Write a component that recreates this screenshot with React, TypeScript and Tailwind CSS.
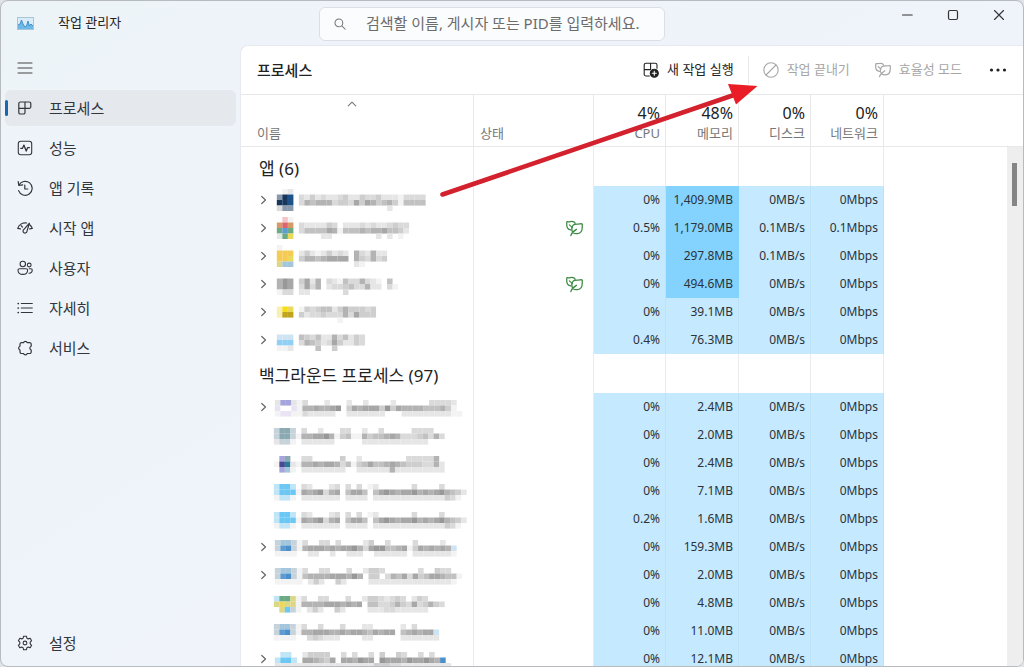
import React from "react";

type IconProps = { children: React.ReactNode; className?: string };

function Icon({ children, className = "size-4" }: IconProps) {
  return (
    <svg
      viewBox="0 0 16 16"
      className={"shrink-0 " + className}
      fill="none"
      stroke="currentColor"
      strokeWidth="1.1"
      strokeLinecap="round"
      strokeLinejoin="round"
      aria-hidden="true"
    >
      {children}
    </svg>
  );
}

const ProcessesIcon = () => (
  <Icon>
    <path
      d="M8 2H3.400A1.600 1.600 0 0 0 1.800 3.600v8.800A1.600 1.600 0 0 0 3.400 14h3A1.600 1.600 0 0 0 8 12.400zM1.800 8.400h10.400A1.600 1.600 0 0 0 13.800 6.800V3.600A1.600 1.600 0 0 0 12.200 2H8"
      strokeWidth="1.200"
    />
  </Icon>
);
const PerformanceIcon = () => (
  <Icon>
    <rect x="1.3" y="1.3" width="13.4" height="13.4" rx="2.4" />
    <path d="M3.8 8.4h1.600l1.500-3.300 2.300 6 1.400-3.400h1.800" strokeWidth="1.300" />
  </Icon>
);
const HistoryIcon = () => (
  <Icon>
    <path d="M1.200 1.600l.6 3.900 3.900-.6M1.800 5.500A7 7 0 1 1 1.600 10.600M7.800 5v4h3" strokeWidth="1.200" />
  </Icon>
);
const StartupIcon = () => (
  <Icon>
    <path
      d="M.7 8.400A8.300 8.300 0 0 1 9.600 3M13 5a8.300 8.300 0 0 1 2.300 3.400M.7 8.400l2.800.4M15.300 8.400l-2.600.4M4.200 5.600l1.300 1.500M12.400 3.200 7 9.300a2 2 0 1 0 3 1.900z"
      strokeWidth="1.200"
    />
  </Icon>
);
const UsersIcon = () => (
  <Icon>
    <circle cx="5.800" cy="4" r="2.700" />
    <circle cx="12.200" cy="5" r="1.900" />
    <path d="M2.400 8.800h6.800a1.400 1.400 0 0 1 1.400 1.400c0 2.600-1.800 4.200-4.800 4.200S1 12.800 1 10.200a1.400 1.400 0 0 1 1.400-1.400zM12.200 8.800h1.700a1.300 1.300 0 0 1 1.300 1.300c0 1.900-1.200 3.200-3.200 3.200" />
  </Icon>
);
const DetailsIcon = () => (
  <Icon>
    <path d="M4.300 3.500h11M4.300 8h11M4.300 12.500h11" />
    <path d="M1.200 3.500h.1M1.200 8h.1M1.200 12.500h.1" strokeWidth="1.700" />
  </Icon>
);
const ServicesIcon = () => (
  <Icon>
    <path
      d="M4.400 2.700h2.100a2 2 0 0 1 3.800 0h2.500a1.400 1.400 0 0 1 1.400 1.400v2.100a2 2 0 0 0 0 3.800v2.100a1.400 1.400 0 0 1-1.400 1.400h-2.500a2 2 0 0 1-3.800 0H4.400A1.400 1.400 0 0 1 3 12.100V10a2 2 0 0 1 0-3.800V4.100a1.400 1.400 0 0 1 1.400-1.400z"
      strokeWidth="1.200"
    />
  </Icon>
);
const SettingsIcon = () => (
  <Icon>
    <circle cx="8" cy="8" r="1.900" />
    <path d="M6.600 1.200h2.800l.5 2 1.300.7 2-.6 1.400 2.400L13.200 7.200v1.600l1.400 1.500-1.400 2.400-2-.6-1.300.7-.5 2H6.600l-.5-2-1.300-.7-2 .6-1.400-2.400 1.400-1.500V7.200L1.400 5.700l1.400-2.400 2 .6 1.300-.7z" />
  </Icon>
);
const LeafIcon = ({ className }: { className?: string }) => (
  <Icon className={className}>
    <path
      d="M4.600 9.300C2.200 9 .7 7.300.7 5V2.300c0-.5.300-.8.800-.7 1.400.3 2.700-.3 4.100-.3 1.500 0 2.700.7 3 1.900M3.200 4.600l2.800 2.600"
      strokeWidth="1.200"
    />
    <path
      d="M4.500 14.700c.6-2 2.400-4.200 5.300-5.900M6.500 11.600C5 9.500 5 6.400 6.900 4.700c1.900-1.600 4.700-.2 7.600-1.200.5-.1.800.2.800.7v2.600c0 3.600-1.700 6-4.900 6.100-1.600.1-3-.3-3.900-1.300z"
      strokeWidth="1.200"
    />
  </Icon>
);
const NewTaskIcon = () => (
  <Icon>
    <path d="M6.400 14H3a1.800 1.800 0 0 1-1.800-1.800V3A1.800 1.800 0 0 1 3 1.200h9.200A1.800 1.800 0 0 1 14 3v3.200M7.600 1.200v6.400M1.200 7.600h6.400" />
    <circle cx="11.300" cy="11.300" r="4" fill="currentColor" />
    <path d="M11.300 9.300v4M9.300 11.300h4" stroke="#fff" />
  </Icon>
);
const BlockIcon = () => (
  <Icon>
    <circle cx="8" cy="8" r="7.200" />
    <path d="M3 13 13 3" />
  </Icon>
);
const Chevron = () => (
  <Icon className="size-3">
    <path d="m5 3.300 5 4.700-5 4.700" strokeWidth="1.600" />
  </Icon>
);

const PALETTE: Record<string, string> = {
  "1": "#f3f3f4",
  "2": "#e6e6e7",
  "3": "#dadada",
  "4": "#cecece",
  "5": "#c1c1c1",
  "6": "#b4b3b4",
  "7": "#a8a7a8",
  "8": "#989899",
  a: "#16365c",
  b: "#1c5287",
  c: "#8899ac",
  d: "#f3c4c8",
  e: "#dc6470",
  f: "#d79a67",
  g: "#6aab86",
  h: "#5d9bd0",
  i: "#ecd95c",
  j: "#f4cb55",
  k: "#a3c6dc",
  l: "#f5df1d",
  m: "#bfa41c",
  n: "#f8f0b0",
  o: "#8fd0f4",
  p: "#cfe4f2",
  q: "#a5a4dc",
  r: "#e9e3f4",
  s: "#8aa9b1",
  t: "#c7d3da",
  u: "#474a93",
  v: "#287a9c",
  w: "#6bc8f4",
  x: "#bfe5f7",
  y: "#4b8fcb",
  z: "#dcd786",
};

const CELL_W = 5.56;

/* Each string is one line of cells, read from the palette; "." is empty. */
function Mosaic({ lines }: { lines: string[] }) {
  return (
    <svg
      viewBox={`0 0 ${36 * CELL_W} 22.2`}
      className="h-[22px] w-[200px] shrink-0"
      aria-hidden="true"
    >
      {lines.map((line, y) =>
        line.split("").map((ch, x) =>
          ch === "." ? null : (
            <rect
              key={`${x}-${y}`}
              x={x * CELL_W}
              y={y * CELL_W}
              width={CELL_W + 0.05}
              height={CELL_W + 0.05}
              fill={PALETTE[ch]}
            />
          )
        )
      )}
    </svg>
  );
}

type Row = {
  lines: string[];
  expand?: boolean;
  eco?: boolean;
  hot?: boolean;
  values: [string, string, string, string];
};

const apps: Row[] = [
  {
    lines: [".12", "cab.32423223422433422213333", "aab.36566634437476456415555", "3cc.................2"],
    expand: true,
    hot: true,
    values: ["0%", "1,409.9MB", "0MB/s", "0Mbps"],
  },
  {
    lines: [".d1", "fef.3222243.222323223433", "ghg.35555761555656675542", "2gi.....22........2.2.1"],
    expand: true,
    eco: true,
    hot: true,
    values: ["0.5%", "1,179.0MB", "0.1MB/s", "0.1Mbps"],
  },
  {
    lines: ["1", "jjj.242124232.632622", "jji.466567777.643634", "zkk...........21"],
    expand: true,
    hot: true,
    values: ["0%", "297.8MB", "0.1MB/s", "0Mbps"],
  },
  {
    lines: ["", "687.4726.3215336321.5", "687.3736.2334533622.31", "133.22......3"],
    expand: true,
    eco: true,
    hot: true,
    values: ["0%", "494.6MB", "0MB/s", "0Mbps"],
  },
  {
    lines: [".", "nli.14345524644434", "nmm.42334333637444", "...........1"],
    expand: true,
    values: ["0%", "39.1MB", "0MB/s", "0Mbps"],
  },
  {
    lines: ["", "ppp.543522635243", "ooo.365423742243", "112....5..4"],
    expand: true,
    values: ["0.4%", "76.3MB", "0MB/s", "0Mbps"],
  },
];

const background: Row[] = [
  {
    lines: ["2qq213...2...2..2....2......33332", "r..r16676678.47677748476666555641", "1rr11322222..2222222...22222222211"],
    expand: true,
    values: ["0%", "2.4MB", "0MB/s", "0Mbps"],
  },
  {
    lines: ["tsst.3..2...33..2..3.....3333", "tsst166778614511645567633345363", "2tt1.222222.....222222222222"],
    values: ["0%", "2.0MB", "0MB/s", "0Mbps"],
  },
  {
    lines: [".qs..33.....4..2........333336", "1uv2166767763514575567654443362", ".qk1.22222222..2222226222222222"],
    values: ["0%", "2.4MB", "0MB/s", "0Mbps"],
  },
  {
    lines: ["xwwx.32...23.3.3.12......3....3", "xwww17678367.5775.57876778676786542", "1xx1.2222222.2222.2222222222222431"],
    values: ["0%", "7.1MB", "0MB/s", "0Mbps"],
  },
  {
    lines: ["xwwx.32...23.3.3.12......3....3", "xwww17678367.5775.57876778676786542", "1xx1.2222222.2222.2222222222222431"],
    values: ["0.2%", "1.6MB", "0MB/s", "0Mbps"],
  },
  {
    lines: ["tkkt13..33.3....24..3....3....2", "thyt1677767677863788556714767676p", "1111..22..2..222..222222.22222221"],
    expand: true,
    values: ["0%", "159.3MB", "0MB/s", "0Mbps"],
  },
  {
    lines: ["tkkt13..33...3..2443......3..433", "thyt156666777686.44.36573745776551", "11111.242..42....2222222222222221"],
    expand: true,
    values: ["0%", "2.0MB", "0MB/s", "0Mbps"],
  },
  {
    lines: ["xggz13..33...3..24432343.243", "zizz166667776767.55334643734643", ".zwt1.242..42....22233222222"],
    values: ["0%", "4.8MB", "0MB/s", "0Mbps"],
  },
  {
    lines: ["tkkt13..3...3...22.....2.3", "thyt166777667677657677.567677p", "1111..343222....22.....2222222"],
    values: ["0%", "11.0MB", "0MB/s", "0Mbps"],
  },
  {
    lines: [".xx..24444..3.3..3.4..43..3.3", "xwwx.776547.776877.87776877876y", "22222222222222222244433222222222"],
    expand: true,
    values: ["0%", "12.1MB", "0MB/s", "0Mbps"],
  },
];

const nav = [
  { label: "프로세스", icon: <ProcessesIcon />, active: true },
  { label: "성능", icon: <PerformanceIcon /> },
  { label: "앱 기록", icon: <HistoryIcon /> },
  { label: "시작 앱", icon: <StartupIcon /> },
  { label: "사용자", icon: <UsersIcon /> },
  { label: "자세히", icon: <DetailsIcon /> },
  { label: "서비스", icon: <ServicesIcon /> },
];

const metrics = [
  { value: "4%", label: "CPU" },
  { value: "48%", label: "메모리" },
  { value: "0%", label: "디스크" },
  { value: "0%", label: "네트워크" },
];

function NavItem({ label, icon, active }: { label: string; icon: React.ReactNode; active?: boolean }) {
  return (
    <a
      href="#"
      className={
        "relative flex h-9 items-center gap-4 rounded-md pl-3 text-[15px] text-[#33363b] " +
        (active ? "bg-[#e5e8ed]" : "")
      }
    >
      {active && <span className="absolute top-[10px] left-0 h-4 w-[3px] rounded-full bg-[#1d66ad]" />}
      {icon}
      {label}
    </a>
  );
}

function GroupRow({ title }: { title: string }) {
  return (
    <tr className="h-[39px]">
      <th scope="rowgroup" className="border-r border-[#ebebeb] p-0 pt-[5px] pl-[18px] text-left text-[17px] font-normal whitespace-nowrap text-[#222]">
        {title}
      </th>
      <td className="border-r border-[#ebebeb]" />
      {metrics.map((m) => (
        <td key={m.label} className="border-r border-[#ebebeb]" />
      ))}
      <td />
    </tr>
  );
}

function ProcessRow({ row, offset }: { row: Row; offset: boolean }) {
  return (
    <tr className="h-7">
      <td className="border-r border-[#ebebeb] p-0">
        <div className="flex h-7 items-center pl-[17px] text-[#666]">
          <span className="flex w-3">{row.expand && <Chevron />}</span>
          <div className={offset ? "pt-2 pl-1" : "pl-[6px]"}>
            <Mosaic lines={row.lines} />
          </div>
        </div>
      </td>
      <td className="border-r border-[#ebebeb] p-0 pr-[10px] text-[#3c8a44]">
        {row.eco && <LeafIcon className="ml-auto size-[17px]" />}
      </td>
      {row.values.map((v, i) => (
        <td
          key={i}
          className={
            "border-r p-0 pr-[5px] text-right " +
            (row.hot && i === 1 ? "border-[#84d2fe] bg-[#84d2fe]" : "border-[#bce2f8] bg-[#c5e9ff]")
          }
        >
          {v}
        </td>
      ))}
      <td />
    </tr>
  );
}

export default function App() {
  return (
    <div className="h-screen bg-[#dfe3e6] font-['Noto_Sans','Noto_Sans_CJK_KR',sans-serif] text-[#222]">
      <div className="flex h-full flex-col overflow-hidden rounded-lg border border-[#b7babf] bg-linear-to-br from-[#edf4f8] via-[#eff3fa] to-[#eff2fb]">
        <header className="flex h-11 shrink-0 items-start">
          <div className="flex h-11 w-[318px] items-center gap-6 pl-4">
            <svg viewBox="0 0 17 13" className="h-[13px] w-[17px]" aria-hidden="true">
              <rect x=".5" y=".5" width="16" height="12" fill="#d8edf9" stroke="#a9c6d8" />
              <path d="M1 12V8l2-1 1.500-4L6 7l2 3 1.500-1L11 4l1.500 5L14 7l2 2v3z" fill="#6cb9e8" />
              <path d="M1 8l2-1 1.500-4L6 7l2 3 1.500-1L11 4l1.500 5L14 7l2 2" fill="none" stroke="#2d82bd" strokeWidth=".8" />
            </svg>
            <h1 className="text-[13px]">작업 관리자</h1>
          </div>
          <label className="mt-[6px] flex h-[34px] w-[346px] items-center gap-5 rounded-md border border-[#dcdfe6] bg-[#fbfcfe] pl-[14px] text-[#777]">
            <Icon className="size-3">
              <circle cx="6.500" cy="6.500" r="5.200" strokeWidth="1.400" />
              <path d="m10.400 10.400 4.600 4.600" strokeWidth="1.400" />
            </Icon>
            <input
              type="search"
              aria-label="검색할 이름, 게시자 또는 PID를 입력하세요."
              placeholder="검색할 이름, 게시자 또는 PID를 입력하세요."
              className="min-w-0 flex-1 bg-transparent pb-[2px] text-[15px] outline-none placeholder:text-[#6c6c6c]"
            />
          </label>
          <div className="ml-auto flex pr-px text-[#333]">
            <button type="button" aria-label="최소화" className="grid h-7 w-[46px] place-items-center">
              <Icon className="size-3"><path d="M2 8h13" strokeWidth="1.400" /></Icon>
            </button>
            <button type="button" aria-label="최대화" className="grid h-7 w-[46px] place-items-center">
              <Icon className="size-3"><rect x="2" y="2" width="12" height="12" rx="2" strokeWidth="1.600" /></Icon>
            </button>
            <button type="button" aria-label="닫기" className="grid h-7 w-[46px] place-items-center">
              <Icon className="size-3"><path d="m2 2 12 12M14 2 2 14" strokeWidth="1.500" /></Icon>
            </button>
          </div>
        </header>

        <div className="flex min-h-0 flex-1">
          <nav className="flex w-[239px] shrink-0 flex-col gap-1 px-1 pt-[5px] pb-[5px]">
            <button type="button" aria-label="메뉴" className="flex h-9 items-center pl-3 text-[#444]">
              <Icon><path d="M1 3h14M1 8h14M1 13h14" /></Icon>
            </button>
            {nav.map((n) => (
              <NavItem key={n.label} {...n} />
            ))}
            <div className="mt-auto">
              <NavItem label="설정" icon={<SettingsIcon />} />
            </div>
          </nav>

          <main className="flex min-w-0 flex-1 flex-col rounded-tl-lg border-t border-l border-[#e6e9ee] bg-white">
            <div className="flex h-[49px] shrink-0 items-center border-b border-[#e8e8e8] pr-[9px] pl-4 text-[13px]">
              <h2 className="mr-auto text-[15px] font-medium">프로세스</h2>
              <button type="button" className="flex items-center gap-2">
                <NewTaskIcon />
                새 작업 실행
              </button>
              <span className="mx-[14px] h-7 w-px bg-[#e8e8e8]" />
              <button type="button" disabled className="flex items-center gap-2 text-[#a6a6a6]">
                <BlockIcon />
                작업 끝내기
              </button>
              <button type="button" disabled className="ml-[25px] flex items-center gap-2 text-[#a6a6a6]">
                <LeafIcon />
                효율성 모드
              </button>
              <button type="button" aria-label="더 보기" className="ml-5 grid size-8 place-items-center">
                <svg viewBox="0 0 18 4" className="h-1 w-[18px]" fill="#222" aria-hidden="true">
                  <circle cx="2.500" cy="2" r="1.600" />
                  <circle cx="9" cy="2" r="1.600" />
                  <circle cx="15.500" cy="2" r="1.600" />
                </svg>
              </button>
            </div>

            <div className="relative min-h-0 flex-1 overflow-hidden">
              <table className="w-full table-fixed border-separate border-spacing-0 text-[12px] text-[#2b3238]">
                <colgroup>
                  <col className="w-[233px]" />
                  <col className="w-[120px]" />
                  <col className="w-[72px]" />
                  <col className="w-[73px]" />
                  <col className="w-[72px]" />
                  <col className="w-[73px]" />
                  <col />
                </colgroup>
                <thead className="text-[13px] text-[#777]">
                  <tr className="h-[52px]">
                    <th scope="col" className="border-r border-b border-[#e8e8e8] p-0 pl-4 font-normal">
                      <div className="flex h-[51px] flex-col justify-between pt-1 pb-[3px] text-left">
                        <Icon className="ml-[90px] size-[10px]">
                          <path d="m2 11 6-6 6 6" strokeWidth="1.700" />
                        </Icon>
                        <span className="leading-5">이름</span>
                      </div>
                    </th>
                    <th scope="col" className="border-r border-b border-[#e8e8e8] p-0 pb-[3px] pl-[6px] text-left align-bottom leading-5 font-normal">
                      상태
                    </th>
                    {metrics.map((m) => (
                      <th key={m.label} scope="col" className="border-r border-b border-[#e8e8e8] p-0 pr-[5px] pb-[3px] text-right align-bottom leading-5 font-normal">
                        <div className="text-base leading-5 text-[#222]">{m.value}</div>
                        {m.label}
                      </th>
                    ))}
                    <th className="border-b border-[#e8e8e8]" />
                  </tr>
                </thead>
                <tbody>
                  <GroupRow title="앱 (6)" />
                  {apps.map((r, i) => (
                    <ProcessRow key={i} row={r} offset={false} />
                  ))}
                </tbody>
                <tbody>
                  <GroupRow title="백그라운드 프로세스 (97)" />
                  {background.map((r, i) => (
                    <ProcessRow key={i} row={r} offset />
                  ))}
                </tbody>
              </table>
              <div className="absolute top-[52px] right-0 bottom-0 w-4 bg-[#eeeeee] pt-4 pl-[5px]">
                <div className="h-[43px] w-[5px] bg-[#858585]" />
              </div>
            </div>
          </main>
        </div>
      </div>

      <svg viewBox="0 0 320 116" className="pointer-events-none absolute top-[82px] left-[440px] h-[116px] w-[320px]" aria-hidden="true">
        <path d="M2.500 112.500 294 13" stroke="#d3222e" strokeWidth="4.600" strokeLinecap="round" />
        <path d="M288 2l29.500 2L296 22.500z" fill="#ea1c25" />
      </svg>
    </div>
  );
}
